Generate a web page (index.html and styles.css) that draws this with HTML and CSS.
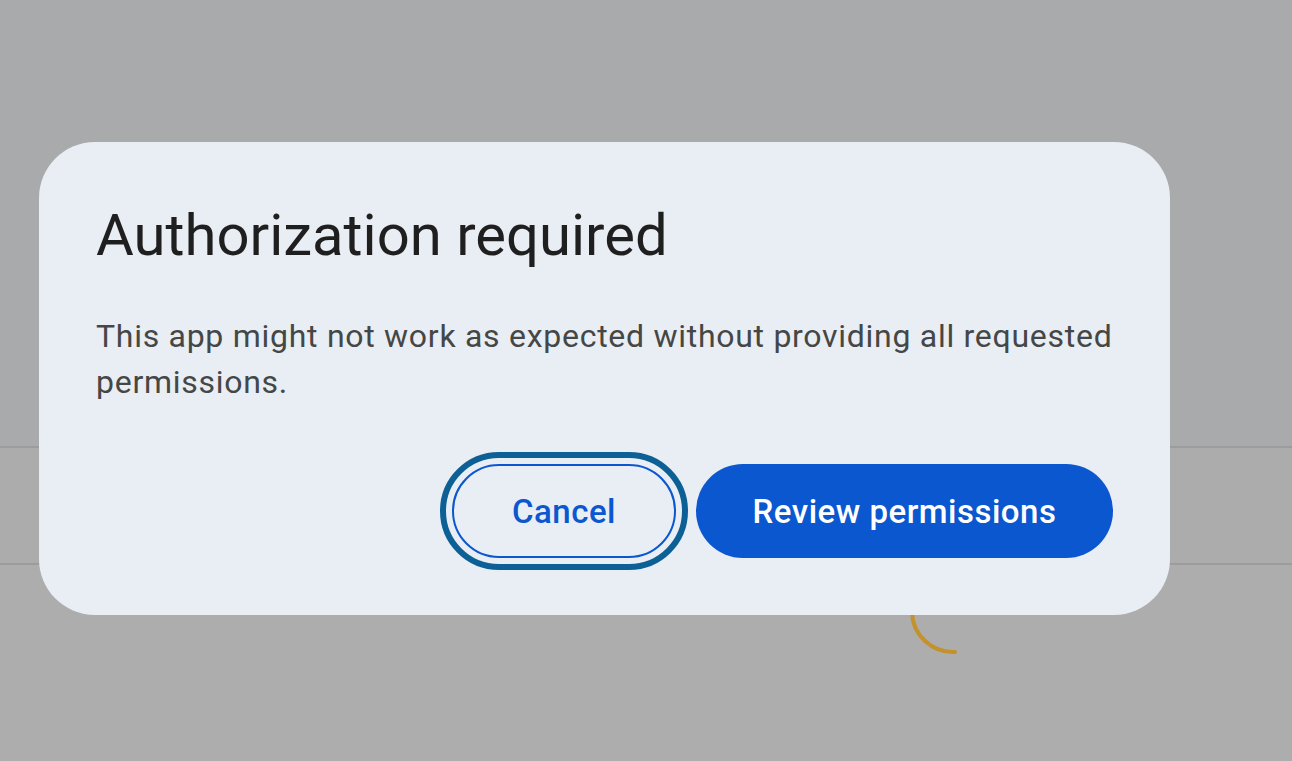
FILE: index.html
```html
<!DOCTYPE html>
<html>
<head>
<meta charset="utf-8">
<link rel="stylesheet" href="styles.css">
</head>
<body>
<div class="page">
  <div class="top"></div>
  <div class="band"></div>
  <div class="bottom"></div>
</div>
<svg class="spinner" width="100" height="100" viewBox="0 0 100 100">
  <path d="M 9 50 A 41 41 0 0 0 52 90" fill="none" stroke="#c4922c" stroke-width="4" stroke-linecap="round"/>
</svg>
<div class="dialog">
  <h1 class="title">Authorization required</h1>
  <p class="body">This app might not work as expected without providing all requested permissions.</p>
  <div class="actions">
    <div class="focus-ring"><button class="btn btn-outline">Cancel</button></div>
    <button class="btn btn-filled">Review permissions</button>
  </div>
</div>
</body>
</html>
```
FILE: styles.css
```css
html, body {
  margin: 0;
  padding: 0;
  width: 1292px;
  height: 761px;
  overflow: hidden;
  font-family: Roboto, "Open Sans", sans-serif;
}
.page {
  display: flex;
  flex-direction: column;
  height: 761px;
}
.top {
  height: 446px;
  background: #a9aaac;
  border-bottom: 2px solid #9c9c9d;
}
.band {
  height: 115px;
  background: #acacac;
  border-bottom: 2px solid #9c9c9d;
}
.bottom {
  flex: 1;
  background: #adadad;
}
.spinner {
  position: absolute;
  left: 903px;
  top: 562px;
}
.dialog {
  position: absolute;
  left: 39px;
  top: 142px;
  width: 1131px;
  height: 473px;
  box-sizing: border-box;
  background: #e9edf4;
  border-radius: 56px;
  padding: 0 57px;
}
.title {
  margin: 0;
  padding-top: 61px;
  font-size: 58px;
  font-weight: 400;
  line-height: 64px;
  color: #1f1f1f;
}
.body {
  margin: 46px -30px 0 0;
  font-size: 32px;
  letter-spacing: 0.72px;
  line-height: 46px;
  color: #444746;
}
.actions {
  display: flex;
  justify-content: flex-end;
  align-items: center;
  gap: 8px;
  margin-top: 47px;
}
.focus-ring {
  border: 6px solid #0d6096;
  border-radius: 60px;
  padding: 6px;
  display: flex;
}
.btn {
  font-family: inherit;
  font-size: 33px;
  letter-spacing: 0.5px;
  font-weight: 500;
  height: 94px;
  border-radius: 47px;
  cursor: pointer;
  padding: 0;
}
.btn-outline {
  width: 224px;
  background: transparent;
  border: 2px solid #0b57d0;
  color: #0b57d0;
}
.btn-filled {
  width: 417px;
  background: #0b57d0;
  border: none;
  color: #ffffff;
}
```
